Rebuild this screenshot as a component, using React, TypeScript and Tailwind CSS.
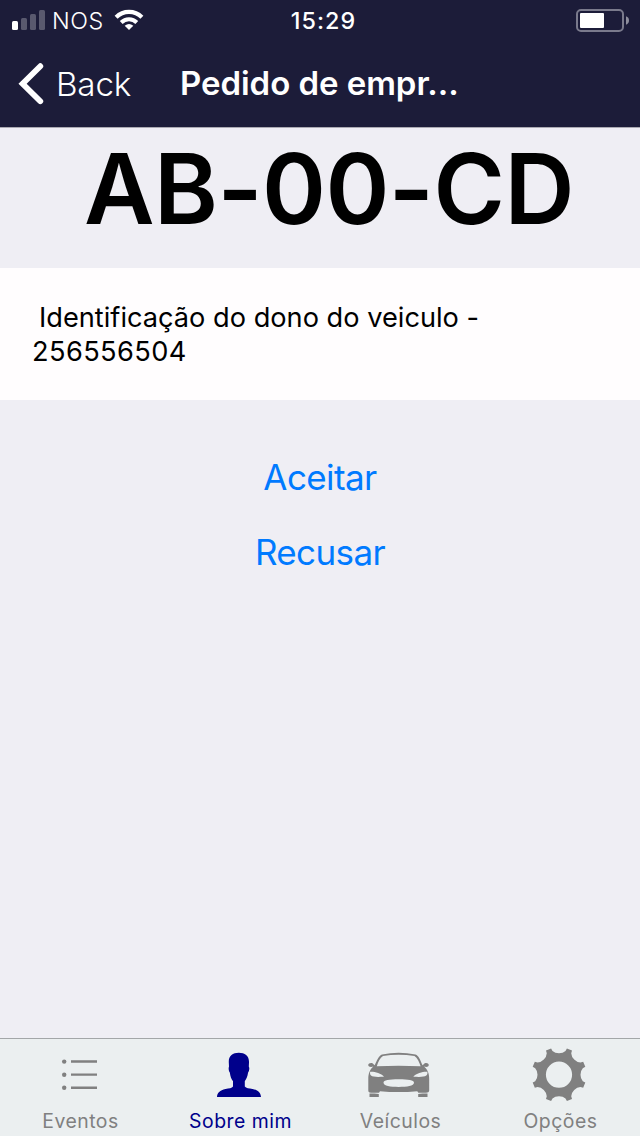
import type { ReactNode } from "react";

const GEAR_TEETH = 8;

function gearPath(): string {
  const rotate = (x: number, y: number, a: number) => {
    const px = x * Math.cos(a) - y * Math.sin(a);
    const py = x * Math.sin(a) + y * Math.cos(a);
    return `${px.toFixed(2)} ${py.toFixed(2)}`;
  };
  let d = "";
  for (let i = 0; i < GEAR_TEETH; i++) {
    const a = (i * 2 * Math.PI) / GEAR_TEETH;
    d += `${i === 0 ? "M" : "L"}${rotate(-7.9, -26.3, a)}`;
    d += `L${rotate(-6.5, -23.8, a)}`;
    d += `Q${rotate(-4, -21.5, a)} ${rotate(0, -21.5, a)}`;
    d += `Q${rotate(4, -21.5, a)} ${rotate(6.5, -23.8, a)}`;
    d += `L${rotate(7.9, -26.3, a)}`;
  }
  return d + "Z M13.1 0A13.1 13.1 0 1 0 -13.1 0A13.1 13.1 0 1 0 13.1 0Z";
}

function StatusBar() {
  return (
    <div className="grid h-10 grid-cols-3 items-center">
      <div className="flex h-10 items-center pl-3">
        <svg width="33" height="20" viewBox="0 0 33 20" fill="#fff">
          <rect x="0" y="11" width="6" height="9" rx="1.5" />
          <rect x="9" y="8" width="6" height="12" rx="1.5" opacity=".27" />
          <rect x="18" y="4" width="6" height="16" rx="1.5" opacity=".27" />
          <rect x="27" y="0" width="6" height="20" rx="1.5" opacity=".27" />
        </svg>
        <span className="ml-[7px] h-10 w-[62px] pt-[2px] text-[23.3px] leading-[38px] font-light tracking-[0.6px]">NOS</span>
        <svg width="30" height="22" viewBox="0 0 30 22" fill="none" stroke="#fff">
          <path d="M2.1 8.2A18.4 18.4 0 0 1 27.9 8.2" strokeWidth="4.2" />
          <path d="M7.2 13.5A11 11 0 0 1 22.8 13.5" strokeWidth="4" />
          <path d="M15 21L10.7 16.8Q15 13 19.3 16.8Z" fill="#fff" stroke="none" />
        </svg>
      </div>
      <div className="h-10 pt-[2px] pl-[7px] text-center text-[23.3px] leading-[38px] font-medium tracking-[1.1px]">15:29</div>
      <div className="flex justify-end pr-[10px]">
        <svg width="54" height="24" viewBox="0 0 54 24">
          <rect x="1" y="2" width="46" height="21" rx="4" fill="none" stroke="#7a7a8c" strokeWidth="2" />
          <rect x="4" y="5" width="24" height="15" rx="1" fill="#fff" />
          <path d="M50 8.2Q53 9.3 53 12.5Q53 15.5 50 16.8Z" fill="#8e8e9d" />
        </svg>
      </div>
    </div>
  );
}

function NavBar() {
  return (
    <div className="flex h-[87px] items-center pl-[18px]">
      <svg width="26" height="42" viewBox="0 0 26 42" fill="none" stroke="#fff" strokeWidth="5.8">
        <path d="M22.3 3.2L4.6 20.7L22.3 38.2" strokeLinecap="round" strokeLinejoin="miter" />
      </svg>
      <span className="ml-[12px] w-[124px] text-[33.2px] leading-10 font-light tracking-[-0.2px]">Back</span>
      <h1 className="pb-[2px] text-[33px] leading-10 font-semibold tracking-[-0.05px]">Pedido de empr...</h1>
    </div>
  );
}

function Tab({ label, active = false, children }: { label: string; active?: boolean; children: ReactNode }) {
  return (
    <div className={`flex flex-col items-center ${active ? "text-[#00008b]" : "text-[#808080]"}`}>
      <div className="flex h-[70px] items-start justify-center">{children}</div>
      <span className="pl-px text-[19.4px] leading-6 tracking-[0.5px]">{label}</span>
    </div>
  );
}

function TabBar() {
  return (
    <nav className="grid h-[98px] grid-cols-4 border-t border-[#a3a6a8] bg-[#ebeff0]">
      <Tab label="Eventos">
        <svg width="60" height="60" viewBox="50 1039 60 60" fill="currentColor">
          <circle cx="64.2" cy="1061.6" r="2.2" />
          <circle cx="64.2" cy="1074.7" r="2.2" />
          <circle cx="64.2" cy="1087.8" r="2.2" />
          <path d="M71 1060.3h26v2.4h-26zM71 1073.4h26v2.4h-26zM71 1086.5h26v2.4h-26z" />
        </svg>
      </Tab>
      <Tab label="Sobre mim" active>
        <svg width="60" height="60" viewBox="210 1039 60 60" fill="currentColor">
          <path d="M238.8 1052.8C245 1052.8 249.3 1056 249 1062.5L248.8 1066.5C249.8 1068 249.2 1071 248.1 1072.5C247.4 1077 246.3 1079 244.8 1081.2V1086.5C246 1088.4 249 1088.3 252.5 1088.9C258 1090 261 1093 261 1097H217C217 1093 220 1090 225.5 1088.9C229 1088.3 232 1088.4 233 1086.5V1081.2C231.3 1079 230.5 1077 229.8 1072.5C228.7 1071 228.3 1068 229 1066.5L228.8 1062.5C228.4 1056 232.5 1052.8 238.8 1052.8Z" />
        </svg>
      </Tab>
      <Tab label="Veículos">
        <svg width="66" height="60" viewBox="367 1039 66 60" fill="currentColor" fillRule="evenodd">
          <path d="M382 1054.4Q398.5 1051.3 415.5 1054.4C418.7 1055.4 420.5 1060.5 422.5 1065.2L424 1064C425 1062.3 428.8 1062.8 428.8 1065C428.8 1067 426.3 1067.2 424 1066.6C427.8 1069.5 429.2 1074 429.2 1079V1090.5Q429 1092.7 426 1092.7H418.3L417.3 1091.2Q398.5 1093 380 1091.2L379 1092.7H371Q368.3 1092.7 368.3 1090.5V1079C368.3 1074 369.7 1069.5 373.3 1066.6C371 1067.2 368.2 1067 368.2 1065C368.2 1062.8 372.3 1062.3 373.3 1064L374.7 1065.2C376.8 1060.5 379 1055.4 382 1054.4ZM383 1056C380 1058 378 1062 376.8 1066.3Q398.5 1065.4 420.6 1066.3C419.4 1062 417.3 1058 414.5 1056Q398.5 1053.6 383 1056ZM370.2 1071.8C373.5 1071.3 381 1073 384 1076.7C379 1076.9 373 1077.3 371 1075.5C370 1074.7 369.8 1073 370.2 1071.8ZM427.3 1071.8C424 1071.3 416.5 1073 413.3 1076.7C418 1076.9 424 1077.3 426.3 1075.5C427.5 1074.7 427.7 1073 427.3 1071.8ZM383.5 1082.5C383.5 1080 389 1079.2 398.7 1079.2S414 1080 414 1082.5C414 1086 407 1086.9 398.7 1086.9S383.5 1086 383.5 1082.5Z" />
          <path d="M369.5 1093.5H374.5L378.8 1094V1097H369.5ZM427.5 1093.5H422.5L418.2 1094V1097H427.5Z" />
        </svg>
      </Tab>
      <Tab label="Opções">
        <svg width="60" height="60" viewBox="-29 -35.7 60 60" overflow="visible" fill="currentColor" fillRule="evenodd">
          <path d={gearPath()} />
        </svg>
      </Tab>
    </nav>
  );
}

export default function App() {
  return (
    <div className="flex h-[1136px] w-[640px] flex-col bg-[#efeef4] font-['Inter',sans-serif] text-black">
      <header className="h-32 border-b border-[#aaa9b2] bg-[#1c1c39] text-white">
        <StatusBar />
        <NavBar />
      </header>
      <main className="flex-1">
        <div className="h-[140px] pl-[84px] text-[97px] leading-[122px] font-semibold tracking-[-0.55px] whitespace-nowrap">AB-00-CD</div>
        <section className="h-[132px] bg-[#fffdfe] pt-[33px] pl-[32px] text-[27.2px] leading-[34px]">
          <p className="pl-[7px]">Identificação do dono do veiculo -</p>
          <p className="tracking-[0.4px]">256556504</p>
        </section>
        <div className="flex flex-col items-center pt-[53px] text-[35px] tracking-[-0.6px] text-[#007aff]">
          <button className="h-12 leading-[48px]">Aceitar</button>
          <button className="mt-[27px] h-12 leading-[48px]">Recusar</button>
        </div>
      </main>
      <TabBar />
    </div>
  );
}
